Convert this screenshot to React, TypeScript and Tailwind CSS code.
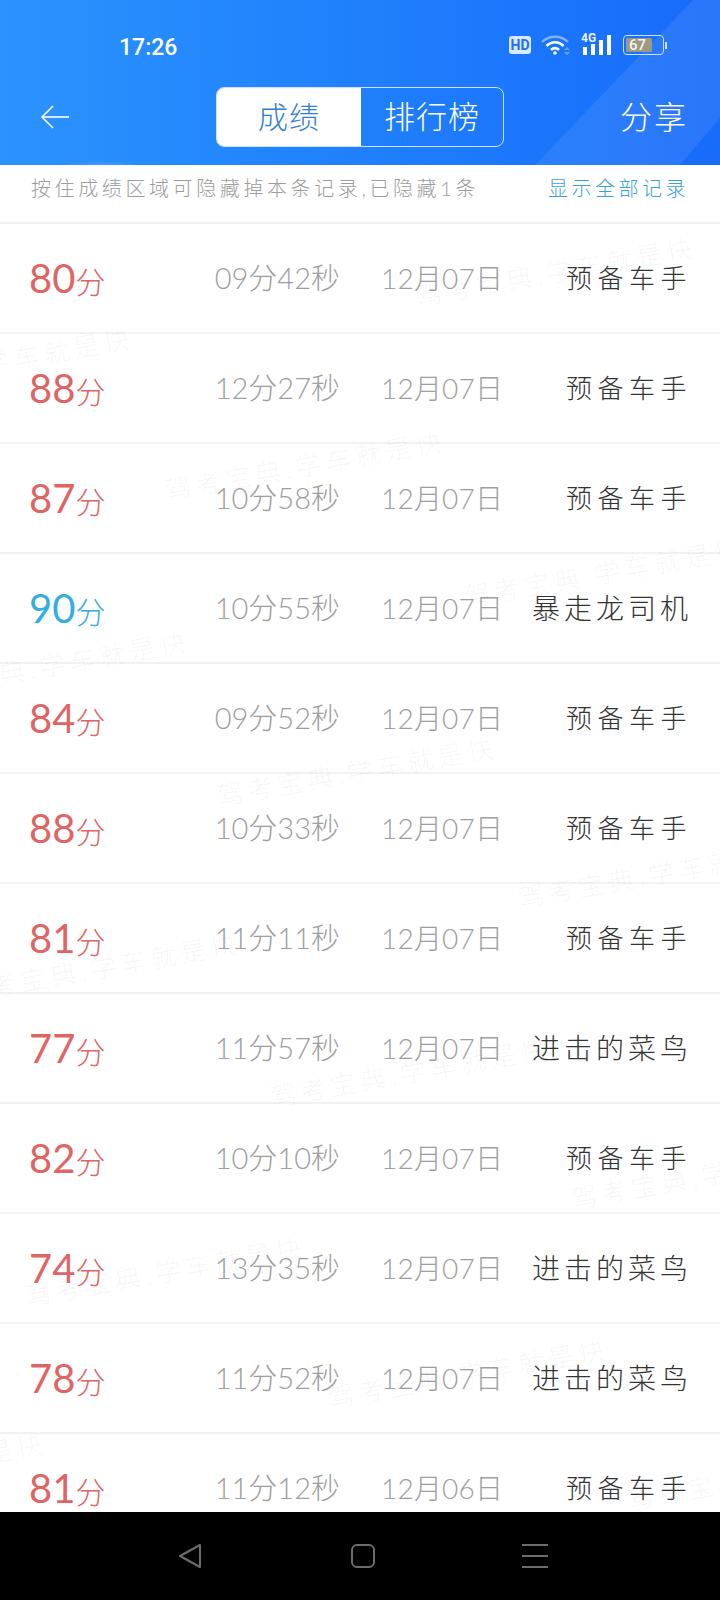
const records = [
  { score: 80, time: "09分42秒", date: "12月07日", level: "预备车手" },
  { score: 88, time: "12分27秒", date: "12月07日", level: "预备车手" },
  { score: 87, time: "10分58秒", date: "12月07日", level: "预备车手" },
  { score: 90, time: "10分55秒", date: "12月07日", level: "暴走龙司机" },
  { score: 84, time: "09分52秒", date: "12月07日", level: "预备车手" },
  { score: 88, time: "10分33秒", date: "12月07日", level: "预备车手" },
  { score: 81, time: "11分11秒", date: "12月07日", level: "预备车手" },
  { score: 77, time: "11分57秒", date: "12月07日", level: "进击的菜鸟" },
  { score: 82, time: "10分10秒", date: "12月07日", level: "预备车手" },
  { score: 74, time: "13分35秒", date: "12月07日", level: "进击的菜鸟" },
  { score: 78, time: "11分52秒", date: "12月07日", level: "进击的菜鸟" },
  { score: 81, time: "11分12秒", date: "12月06日", level: "预备车手" },
];

// the watermark repeats across the list, each one sits on its own spot
const watermarks = [
  "left-[416px] top-[116px]",
  "left-[-147px] top-[207px]",
  "left-[165px] top-[310px]",
  "left-[464px] top-[417px]",
  "left-[-91px] top-[510px]",
  "left-[217px] top-[616px]",
  "left-[518px] top-[718px]",
  "left-[-40px] top-[812px]",
  "left-[270px] top-[917px]",
  "left-[571px] top-[1019px]",
  "left-[25px] top-[1116px]",
  "left-[328px] top-[1218px]",
  "left-[-234px] top-[1312px]",
  "left-[627px] top-[1320px]",
];

const StatusIcons = () => (
  <div className="flex items-center">
    <div className="w-[22px] h-[18px] rounded-[3px] bg-[#d9e9ff] text-[#1f6ff0] text-[14px] leading-[18px] font-bold text-center font-['Roboto',sans-serif]">HD</div>
    <svg className="ml-[10px]" width="30" height="20" viewBox="0 0 30 20" fill="none">
      <path d="M1 7 C8 0 20 0 27 7" stroke="#ffffff" strokeOpacity="0.45" strokeWidth="2.4" />
      <path d="M5.5 11 C10.5 6 17.5 6 22.5 11" stroke="#ffffff" strokeWidth="2.6" />
      <path d="M10 15 C12.5 12.6 15.5 12.6 18 15" stroke="#ffffff" strokeWidth="2.6" />
      <circle cx="14" cy="18" r="1.8" fill="#ffffff" />
      <path d="M26 12l3 3h-6zM26 20l3-3h-6z" fill="#ffffff" fillOpacity="0.35" />
    </svg>
    <div className="relative ml-[10px] w-[32px] h-[20px]">
      <span className="absolute left-0 top-[-3px] text-[12px] leading-[12px] font-bold text-[#e8f1ff] font-['Roboto',sans-serif]">4G</span>
      <svg className="absolute inset-0" width="32" height="20" viewBox="0 0 32 20">
        <rect x="2" y="12" width="4" height="8" fill="#ffffff" />
        <rect x="10" y="9" width="4" height="11" fill="#ffffff" />
        <rect x="18" y="5" width="4" height="15" fill="#ffffff" />
        <rect x="26" y="0" width="4" height="20" fill="#ffffff" />
      </svg>
    </div>
    <div className="ml-[10px] flex items-center">
      <div className="w-[41px] h-[20px] rounded-[4px] border border-[#cfe2ff] p-[2px]">
        <div className="w-[26px] h-full rounded-[1px] bg-[#9d9a80] text-[#f3f3f3] text-[15px] leading-[14px] font-medium pl-[3px] font-['Roboto',sans-serif]">67</div>
      </div>
      <div className="w-[2px] h-[7px] bg-[#cfe2ff] ml-[1px]"></div>
    </div>
  </div>
);

const Header = () => (
  <header className="relative h-[165px] shrink-0 overflow-hidden bg-gradient-to-r from-[#2b93fd] to-[#186bfb] text-white">
    <svg className="absolute inset-0" width="720" height="165" viewBox="0 0 720 165">
      <polygon points="693,0 720,0 720,118 680,165 535,165" fill="#ffffff" fillOpacity="0.08" />
      <ellipse cx="100" cy="172" rx="52" ry="10" fill="#ffffff" fillOpacity="0.08" />
    </svg>
    <div className="relative h-[87px] pt-[36px] pl-[119px] pr-[53px] flex justify-between items-start">
      <span className="text-[23px] leading-[24px] font-medium font-['Roboto',sans-serif]">17:26</span>
      <div className="-mt-px">
        <StatusIcons />
      </div>
    </div>
    <div className="relative h-[60px] grid grid-cols-[216px_288px_1fr] items-center">
      <svg className="ml-[40px]" width="30" height="26" viewBox="0 0 30 26" fill="none" stroke="#ffffff" strokeWidth="1.6">
        <path d="M29 13H2" />
        <path d="M13 2 2 13l11 11" />
      </svg>
      <div className="h-[60px] flex rounded-[8px] border border-[#cfe0fb] overflow-hidden">
        <div className="w-[144px] bg-white text-[#2f80d0] text-[30px] leading-[56px] text-center tracking-[1px]">成绩</div>
        <div className="flex-1 text-white text-[31px] leading-[56px] text-center tracking-[1px]">排行榜</div>
      </div>
      <div className="pr-[32px] text-right text-[32px] leading-[60px] tracking-[2px]">分享</div>
    </div>
  </header>
);

const App = () => {
  return (
    <div className="w-[720px] h-[1600px] flex flex-col overflow-hidden bg-white font-['Lato','Noto_Sans_CJK_SC',sans-serif] font-light">
      <Header />

      <main className="relative flex-1 overflow-hidden">
        <div className="h-[59px] pl-[31px] pr-[31px] pt-[8px] flex justify-between items-start border-b-2 border-[#f2f2f2] text-[20px] leading-[30px]">
          <span className="text-[#9c9c9c] tracking-[3.6px]">按住成绩区域可隐藏掉本条记录,已隐藏1条</span>
          <span className="text-[#38a3d6] tracking-[3.5px]">显示全部记录</span>
        </div>

        {records.map((r, i) => (
          <div key={i} className="h-[110px] pl-[29px] pr-[32px] grid grid-cols-[100px_211px_1fr_auto] items-center border-b-2 border-[#f2f2f2]">
            <div className={r.score === 90 ? "text-[#33aee0] whitespace-nowrap" : "text-[#e06464] whitespace-nowrap"}>
              <span className="text-[40px] font-normal">{r.score}</span>
              <span className="text-[30px]">分</span>
            </div>
            <div className="text-right text-[#9e9e9e] text-[29px] whitespace-nowrap">{r.time}</div>
            <div className="pl-[41px] text-[#9e9e9e] text-[28px] tracking-[0.2px] whitespace-nowrap">{r.date}</div>
            <div className={r.level.length === 4 ? "text-[#333333] text-[26px] tracking-[5.5px] -mr-[4px]" : "text-[#333333] text-[28px] tracking-[4px] -mr-[4px]"}>{r.level}</div>
          </div>
        ))}

        {watermarks.map((pos) => (
          <span key={pos} className={`absolute ${pos} origin-left -rotate-[10deg] whitespace-nowrap text-[26px] leading-[30px] tracking-[4.5px] text-[#000000]/[0.05] pointer-events-none`}>
            驾考宝典,学车就是快
          </span>
        ))}
      </main>

      <nav className="h-[88px] shrink-0 bg-black flex items-center pl-[178px]">
        <svg width="24" height="26" viewBox="0 0 24 26" fill="none" stroke="#6c6c6c" strokeWidth="2" strokeLinejoin="round">
          <path d="M22 2 2 13l20 11z" />
        </svg>
        <div className="ml-[149px] w-[24px] h-[24px] rounded-[6px] border-2 border-[#6c6c6c]"></div>
        <div className="ml-[147px] w-[26px] h-[24px] flex flex-col justify-between">
          <div className="h-[2px] bg-[#6c6c6c]"></div>
          <div className="h-[2px] bg-[#6c6c6c]"></div>
          <div className="h-[2px] bg-[#6c6c6c]"></div>
        </div>
      </nav>
    </div>
  );
};

export default App;
